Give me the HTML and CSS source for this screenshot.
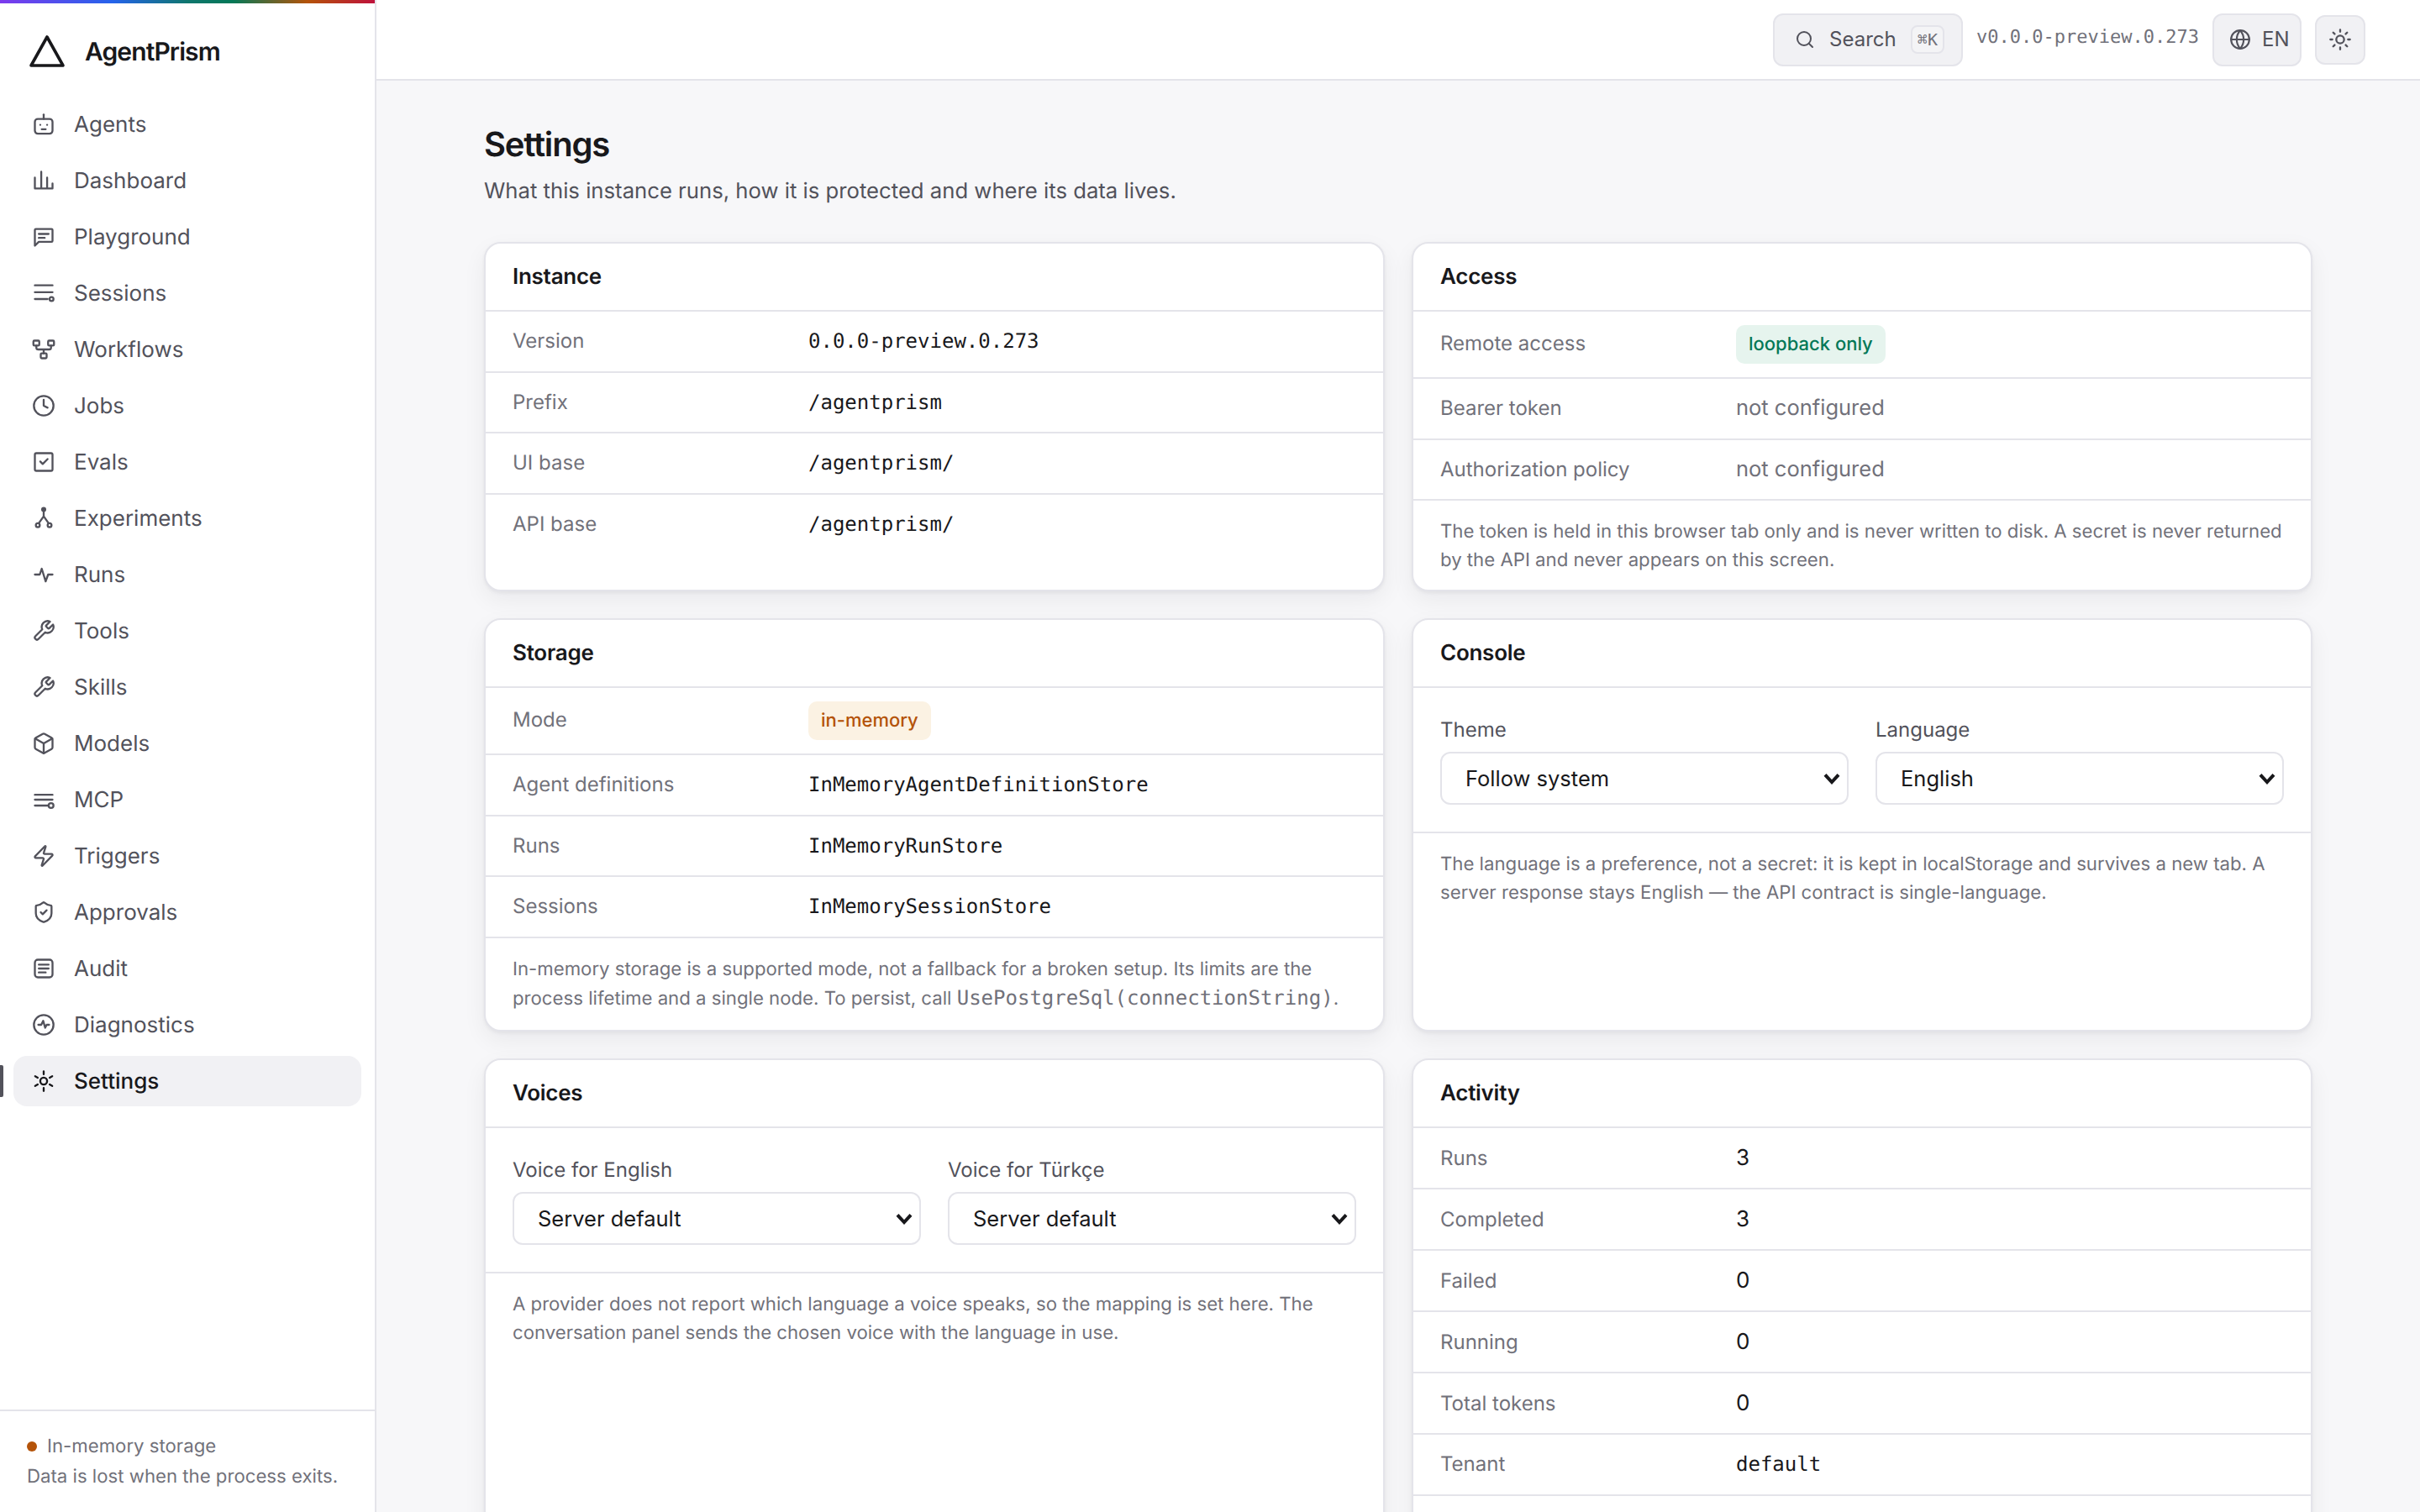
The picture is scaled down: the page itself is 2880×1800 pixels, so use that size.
FILE: index.html
```html
<!DOCTYPE html>
<html lang="en">
<head>
  <meta charset="UTF-8" />
  <title>AgentPrism - Settings</title>
  <link rel="stylesheet" href="styles.css">
</head>
<body>
  <div class="shell">

    <aside class="sidebar">
      <div class="brand">
        <svg class="brand-mark" viewBox="0 0 44 40"><path d="M22 3 L41 37 H3 Z" /></svg>
        <span class="brand-name">AgentPrism</span>
      </div>

      <nav class="nav">
        <a class="nav-item"><svg class="icon" viewBox="0 0 24 24"><rect x="3" y="6.5" width="18" height="15" rx="3" /><path d="M12 6.5V2" /><path d="M8.5 12.5h.01M15.5 12.5h.01" /><path d="M10 17h4" /></svg>Agents</a>
        <a class="nav-item"><svg class="icon" viewBox="0 0 24 24"><path d="M3 20h18M3 20V9M9.5 20V3M15.5 20V9M21 20v-5" /></svg>Dashboard</a>
        <a class="nav-item"><svg class="icon" viewBox="0 0 24 24"><path d="M21 16a1 1 0 0 1-1 1H7l-4 4V5a1 1 0 0 1 1-1h16a1 1 0 0 1 1 1z" /><path d="M7 9h10M7 13h6" /></svg>Playground</a>
        <a class="nav-item"><svg class="icon" viewBox="0 0 24 24"><path d="M3 4h18M3 11h18M3 18h13" /><circle cx="20" cy="18" r="2" /></svg>Sessions</a>
        <a class="nav-item"><svg class="icon" viewBox="0 0 24 24"><rect x="1.5" y="3" width="6" height="5" rx="1" /><rect x="16.5" y="3" width="6" height="5" rx="1" /><rect x="9" y="16" width="6" height="5" rx="1" /><path d="M4.5 8v2a2 2 0 0 0 2 2h11a2 2 0 0 0 2-2V8M12 12v4" /></svg>Workflows</a>
        <a class="nav-item"><svg class="icon" viewBox="0 0 24 24"><circle cx="12" cy="12" r="10" /><path d="M12 6v6l4 2" /></svg>Jobs</a>
        <a class="nav-item"><svg class="icon" viewBox="0 0 24 24"><rect x="3" y="3" width="18" height="18" rx="1.5" /><path d="m8.5 11.5 2.5 2.5 5-5" /></svg>Evals</a>
        <a class="nav-item"><svg class="icon" viewBox="0 0 24 24"><circle class="solid" cx="12" cy="3" r="1.6" /><circle cx="6" cy="19" r="2" /><circle cx="18" cy="19" r="2" /><path d="M12 4v6M12 10l-5 7M12 10l5 7" /></svg>Experiments</a>
        <a class="nav-item"><svg class="icon" viewBox="0 0 24 24"><path d="M3 12h5l2-6 4 13 2.5-7H21" /></svg>Runs</a>
        <a class="nav-item"><svg class="icon" viewBox="0 0 24 24"><path d="M14.7 6.3a1 1 0 0 0 0 1.4l1.6 1.6a1 1 0 0 0 1.4 0l3.77-3.77a6 6 0 0 1-7.94 7.94l-6.91 6.91a2.12 2.12 0 0 1-3-3l6.91-6.91a6 6 0 0 1 7.94-7.94l-3.76 3.76z" /></svg>Tools</a>
        <a class="nav-item"><svg class="icon" viewBox="0 0 24 24"><path d="M14.7 6.3a1 1 0 0 0 0 1.4l1.6 1.6a1 1 0 0 0 1.4 0l3.77-3.77a6 6 0 0 1-7.94 7.94l-6.91 6.91a2.12 2.12 0 0 1-3-3l6.91-6.91a6 6 0 0 1 7.94-7.94l-3.76 3.76z" /></svg>Skills</a>
        <a class="nav-item"><svg class="icon" viewBox="0 0 24 24"><path d="M21 8a2 2 0 0 0-1-1.73l-7-4a2 2 0 0 0-2 0l-7 4A2 2 0 0 0 3 8v8a2 2 0 0 0 1 1.73l7 4a2 2 0 0 0 2 0l7-4A2 2 0 0 0 21 16Z" /><path d="m3.3 7 8.7 5 8.7-5M12 22V12" /></svg>Models</a>
        <a class="nav-item"><svg class="icon" viewBox="0 0 24 24"><path d="M3 7h18M3 12h18M3 18h13" /><circle cx="19.5" cy="18" r="2.5" /></svg>MCP</a>
        <a class="nav-item"><svg class="icon" viewBox="0 0 24 24"><path d="M4 14a1 1 0 0 1-.78-1.63l9.9-10.2a.5.5 0 0 1 .86.46l-1.92 6.02A1 1 0 0 0 13 10h7a1 1 0 0 1 .78 1.63l-9.9 10.2a.5.5 0 0 1-.86-.46l1.92-6.02A1 1 0 0 0 11 14z" /></svg>Triggers</a>
        <a class="nav-item"><svg class="icon" viewBox="0 0 24 24"><path d="M20 13c0 5-3.5 7.5-7.66 8.95a1 1 0 0 1-.67-.01C7.5 20.5 4 18 4 13V6a1 1 0 0 1 1-1c2 0 4.5-1.2 6.24-2.72a1.17 1.17 0 0 1 1.52 0C14.51 3.81 17 5 19 5a1 1 0 0 1 1 1z" /><path d="m9 12 2 2 4-4" /></svg>Approvals</a>
        <a class="nav-item"><svg class="icon" viewBox="0 0 24 24"><rect x="3" y="3" width="18" height="18" rx="3" /><path d="M7 8h10M7 12h10M7 16h7" /></svg>Audit</a>
        <a class="nav-item"><svg class="icon" viewBox="0 0 24 24"><circle cx="12" cy="12" r="10" /><path d="M6.5 12h3l2-4 2 7 1.5-3h2.5" /></svg>Diagnostics</a>
        <a class="nav-item active"><svg class="icon" viewBox="0 0 24 24"><circle cx="12" cy="12" r="3.5" /><path d="M12 2v3M12 19v3M3.3 7l2.6 1.5M18.1 15.5l2.6 1.5M3.3 17l2.6-1.5M18.1 8.5l2.6-1.5" /></svg>Settings</a>
      </nav>

      <div class="sidebar-foot">
        <div class="storage-state"><span class="dot"></span>In-memory storage</div>
        <div>Data is lost when the process exits.</div>
      </div>
    </aside>

    <div class="content">
      <header class="topbar">
        <button class="tool search">
          <svg class="icon icon-sm" viewBox="0 0 24 24"><circle cx="11" cy="11" r="8" /><path d="m21 21-4.3-4.3" /></svg>
          <span>Search</span>
          <kbd>⌘K</kbd>
        </button>
        <span class="version">v0.0.0-preview.0.273</span>
        <button class="tool lang">
          <svg class="icon icon-md" viewBox="0 0 24 24"><circle cx="12" cy="12" r="10" /><path d="M2 12h20M12 2a15 15 0 0 1 0 20a15 15 0 0 1 0-20" /></svg>
          <span>EN</span>
        </button>
        <button class="tool theme">
          <svg class="icon" viewBox="0 0 24 24"><circle cx="12" cy="12" r="4" /><path d="M12 2v2M12 20v2M4.93 4.93l1.41 1.41M17.66 17.66l1.41 1.41M2 12h2M20 12h2M6.34 17.66l-1.41 1.41M19.07 4.93l-1.41 1.41" /></svg>
        </button>
      </header>

      <main class="page">
        <h1>Settings</h1>
        <p class="lead">What this instance runs, how it is protected and where its data lives.</p>

        <div class="cards">
          <section class="card">
            <h2>Instance</h2>
            <div class="row"><span class="key">Version</span><span class="mono">0.0.0-preview.0.273</span></div>
            <div class="row"><span class="key">Prefix</span><span class="mono">/agentprism</span></div>
            <div class="row"><span class="key">UI base</span><span class="mono">/agentprism/</span></div>
            <div class="row last"><span class="key">API base</span><span class="mono">/agentprism/</span></div>
          </section>

          <section class="card">
            <h2>Access</h2>
            <div class="row"><span class="key">Remote access</span><span><span class="badge ok">loopback only</span></span></div>
            <div class="row"><span class="key">Bearer token</span><span class="muted">not configured</span></div>
            <div class="row"><span class="key">Authorization policy</span><span class="muted">not configured</span></div>
            <p class="note">The token is held in this browser tab only and is never written to disk. A secret is never returned by the API and never appears on this screen.</p>
          </section>

          <section class="card">
            <h2>Storage</h2>
            <div class="row"><span class="key">Mode</span><span><span class="badge warn">in-memory</span></span></div>
            <div class="row"><span class="key">Agent definitions</span><span class="mono">InMemoryAgentDefinitionStore</span></div>
            <div class="row"><span class="key">Runs</span><span class="mono">InMemoryRunStore</span></div>
            <div class="row"><span class="key">Sessions</span><span class="mono">InMemorySessionStore</span></div>
            <p class="note">In-memory storage is a supported mode, not a fallback for a broken setup. Its limits are the process lifetime and a single node. To persist, call <code>UsePostgreSql(connectionString)</code>.</p>
          </section>

          <section class="card">
            <h2>Console</h2>
            <div class="fields">
              <label class="field">Theme
                <select><option>Follow system</option><option>Light</option><option>Dark</option></select>
              </label>
              <label class="field">Language
                <select><option>English</option><option>Türkçe</option></select>
              </label>
            </div>
            <p class="note">The language is a preference, not a secret: it is kept in localStorage and survives a new tab. A server response stays English — the API contract is single-language.</p>
          </section>

          <section class="card">
            <h2>Voices</h2>
            <div class="fields">
              <label class="field">Voice for English
                <select><option>Server default</option></select>
              </label>
              <label class="field">Voice for Türkçe
                <select><option>Server default</option></select>
              </label>
            </div>
            <p class="note">A provider does not report which language a voice speaks, so the mapping is set here. The conversation panel sends the chosen voice with the language in use.</p>
          </section>

          <section class="card">
            <h2>Activity</h2>
            <div class="row"><span class="key">Runs</span><span class="num">3</span></div>
            <div class="row"><span class="key">Completed</span><span class="num">3</span></div>
            <div class="row"><span class="key">Failed</span><span class="num">0</span></div>
            <div class="row"><span class="key">Running</span><span class="num">0</span></div>
            <div class="row"><span class="key">Total tokens</span><span class="num">0</span></div>
            <div class="row"><span class="key">Tenant</span><span class="mono">default</span></div>
            <div class="row last spacer"></div>
          </section>
        </div>
      </main>
    </div>

  </div>
</body>
</html>
```

FILE: styles.css
```css
* {
  box-sizing: border-box;
}

html, body {
  height: 100%;
}

body {
  margin: 0;
  overflow: hidden;
  background: #f7f7f9;
  color: #18181b;
  font-family: Inter, 'Noto Sans', sans-serif;
  font-size: 26px;
  line-height: 1.5;
  text-rendering: geometricPrecision;
}

.shell {
  display: flex;
  height: 100vh;
}

/* Sidebar */
.sidebar {
  position: relative;
  flex: 0 0 448px;
  display: flex;
  flex-direction: column;
  background: #fff;
  border-right: 2px solid #e4e4ea;
}

.sidebar::before {
  content: "";
  height: 4px;
  background: linear-gradient(90deg, #7c3aed 0%, #2563eb 30%, #0f766e 50%, #047857 62%, #b45309 82%, #be123c 100%);
}

.brand {
  display: flex;
  align-items: center;
  gap: 23px;
  height: 114px;
  padding: 0 0 0 34px;
}

.brand-mark {
  width: 44px;
  height: 40px;
  fill: none;
  stroke: #18181b;
  stroke-width: 3.6;
  stroke-linejoin: round;
}

.brand-name {
  padding-top: 2px;
  font-size: 30px;
  font-weight: 600;
  letter-spacing: -0.03em;
}

.nav {
  display: flex;
  flex-direction: column;
  gap: 7px;
  padding: 0 16px;
}

.nav-item {
  position: relative;
  display: flex;
  align-items: center;
  gap: 22px;
  height: 60px;
  padding-left: 22px;
  border-radius: 16px;
  color: #52525b;
}

.nav-item.active {
  background: #f1f1f4;
  color: #18181b;
  font-weight: 500;
}

.nav-item.active::before {
  content: "";
  position: absolute;
  left: -16px;
  top: 11px;
  width: 4px;
  height: 38px;
  border-radius: 0 2px 2px 0;
  background: #52525b;
}

.icon {
  flex: none;
  width: 28px;
  height: 28px;
  fill: none;
  stroke: currentColor;
  stroke-width: 2;
  stroke-linecap: round;
  stroke-linejoin: round;
}

.icon .solid {
  fill: currentColor;
}

.icon-sm {
  width: 24px;
  height: 24px;
}

.icon-md {
  width: 26px;
  height: 26px;
}

.sidebar-foot {
  margin-top: auto;
  padding: 24px 32px;
  border-top: 2px solid #e4e4ea;
  color: #71717a;
  font-size: 22.2px;
  line-height: 36px;
}

.storage-state {
  display: flex;
  align-items: center;
  gap: 12px;
}

.dot {
  width: 12px;
  height: 12px;
  border-radius: 50%;
  background: #b45309;
}

/* Top bar */
.content {
  flex: 1;
  min-width: 0;
  display: flex;
  flex-direction: column;
}

.topbar {
  flex: 0 0 96px;
  display: flex;
  align-items: center;
  justify-content: flex-end;
  gap: 16px;
  padding: 0 65px 0 0;
  background: #fff;
  border-bottom: 2px solid #e4e4ea;
}

.tool {
  display: flex;
  align-items: center;
  height: 63px;
  padding: 0;
  background: #f1f1f4;
  border: 2px solid #e4e4ea;
  border-radius: 12px;
  color: #52525b;
  font: inherit;
  font-size: 24px;
}

.search {
  width: 226px;
  padding-left: 24px;
  gap: 17px;
}

.search kbd {
  display: flex;
  align-items: center;
  justify-content: center;
  width: 43px;
  height: 34px;
  margin-left: auto;
  margin-right: 20px;
  background: #f4f4f6;
  border: 2px solid #e4e4ea;
  border-radius: 8px;
  color: #71717a;
  font-family: 'DejaVu Sans Mono', monospace;
  font-size: 20px;
}

.version {
  padding-bottom: 6px;
  color: #71717a;
  font-family: 'DejaVu Sans Mono', monospace;
  font-size: 22px;
}

.lang {
  width: 106px;
  padding-left: 18px;
  gap: 13px;
}

.theme {
  justify-content: center;
  width: 60px;
  height: 59px;
}

/* Page */
.page {
  flex: 1;
  min-height: 0;
  overflow: hidden;
  padding: 48px 128px 0;
}

h1 {
  margin: 0;
  font-size: 40px;
  font-weight: 600;
  line-height: 56px;
  letter-spacing: -0.03em;
}

.lead {
  margin: 6px 0 38px;
  color: #52525b;
  font-size: 25.7px;
  line-height: 44px;
}

.cards {
  display: grid;
  grid-template-columns: 1fr 1fr;
  grid-template-rows: 416px 492px auto;
  gap: 32px;
}

.card {
  display: flex;
  flex-direction: column;
  background: #fff;
  border: 2px solid #e4e4ea;
  border-radius: 20px;
  box-shadow: 0 2px 4px rgba(24, 24, 27, 0.05), 0 10px 28px rgba(24, 24, 27, 0.06);
}

h2 {
  margin: 0;
  padding: 21px 32px 20px;
  border-bottom: 2px solid #e4e4ea;
  font-size: 26px;
  font-weight: 600;
  line-height: 38px;
  letter-spacing: -0.01em;
}

.row {
  display: grid;
  grid-template-columns: 352px 1fr;
  align-items: baseline;
  padding: 16px 32px;
  border-bottom: 2px solid #e4e4ea;
  line-height: 37.5px;
}

.row.last {
  border-bottom: 0;
}

.row.spacer {
  height: 72px;
}

.key {
  color: #71717a;
  font-size: 24px;
}

.mono {
  font-family: 'DejaVu Sans Mono', monospace;
  font-size: 24px;
}

.num {
  line-height: 39px;
}

.muted {
  color: #71717a;
  font-size: 25.5px;
  line-height: 38.5px;
}

.badge {
  display: inline-block;
  padding: 4px 15px;
  border-radius: 10px;
  font-size: 22px;
  font-weight: 500;
  line-height: 38px;
}

.badge.ok {
  background: #e6f4ee;
  color: #047857;
}

.badge.warn {
  background: #fbf2e3;
  color: #b45309;
}

.note {
  margin: 0;
  padding: 20px 32px 18px;
  color: #71717a;
  font-size: 22.2px;
  line-height: 34px;
}

.note code {
  font-family: 'DejaVu Sans Mono', monospace;
  font-size: 24px;
}

.fields {
  display: grid;
  grid-template-columns: 1fr 1fr;
  gap: 32px;
  padding: 32px;
  border-bottom: 2px solid #e4e4ea;
}

.field {
  display: flex;
  flex-direction: column;
  gap: 8px;
  color: #52525b;
  font-size: 24px;
  line-height: 36px;
}

select {
  appearance: none;
  width: 100%;
  height: 63px;
  padding: 0 28px;
  background: #fff url("data:image/svg+xml,%3Csvg xmlns='http://www.w3.org/2000/svg' viewBox='0 0 16 12'%3E%3Cpath d='M2 2.5 8 9l6-6.5' fill='none' stroke='%2318181b' stroke-width='3'/%3E%3C/svg%3E") no-repeat right 7px center / 22px 16px;
  border: 2px solid #e4e4ea;
  border-radius: 12px;
  color: #18181b;
  font: inherit;
  font-size: 25.5px;
}
```
